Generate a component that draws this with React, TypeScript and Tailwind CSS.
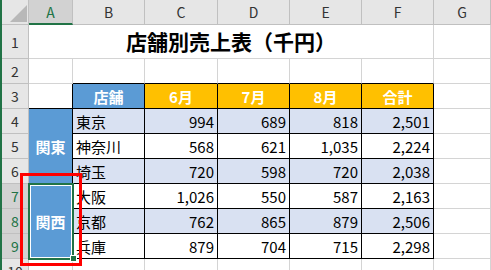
import React from "react";

const FONT = "font-['Noto_Sans_CJK_JP','Noto_Sans',sans-serif]";

const rows = [
  { name: "東京", v: ["994", "689", "818", "2,501"], stripe: true },
  { name: "神奈川", v: ["568", "621", "1,035", "2,224"], stripe: false },
  { name: "埼玉", v: ["720", "598", "720", "2,038"], stripe: true },
  { name: "大阪", v: ["1,026", "550", "587", "2,163"], stripe: false },
  { name: "京都", v: ["762", "865", "879", "2,506"], stripe: true },
  { name: "兵庫", v: ["879", "704", "715", "2,298"], stripe: false },
];

const hdr =
  "bg-[#e6e6e6] border-r border-b border-[#c0c0c0] flex items-center justify-center text-[14px] text-[#333]";
const hdrSel =
  "bg-[#d2d2d2] border-r border-b border-[#c0c0c0] flex items-center justify-center text-[14px] text-[#217346]";
const grid = "border-r border-b border-[#d4d4d4] bg-white";

export default function App() {
  const cells: React.ReactNode[] = [];
  let k = 0;
  const push = (n: React.ReactNode) => cells.push(<React.Fragment key={k++}>{n}</React.Fragment>);

  // Column header row
  push(
    <div className="bg-[#e6e6e6] border-r border-b border-[#c0c0c0] relative">
      <svg className="absolute left-[8px] top-[5px]" width="17" height="17" viewBox="0 0 17 17">
        <polygon points="17,0 17,17 0,17" fill="#b8b8b8" />
      </svg>
    </div>
  );
  push(
    <div className="bg-[#d2d2d2] border-r border-[#c0c0c0] border-b-2 border-b-[#217346] flex items-center justify-center text-[14px] text-[#217346]">
      A
    </div>
  );
  ["B", "C", "D", "E", "F", "G"].forEach((c) => push(<div className={hdr}>{c}</div>));

  // Row 1
  push(<div className={hdr}>1</div>);
  push(
    <div className="col-span-6 border-r border-b border-[#d4d4d4] bg-white flex items-center justify-center text-[21px] font-bold text-black">
      店舗別売上表（千円）
    </div>
  );
  push(<div className={grid} />);

  // Row 2
  push(<div className={hdr}>2</div>);
  push(<div className={grid} />);
  for (let i = 0; i < 5; i++)
    push(<div className="border-r border-[#d4d4d4] border-b border-b-black bg-white" />);
  push(<div className={grid} />);

  // Row 3
  push(<div className={hdr}>3</div>);
  push(<div className="bg-white border-r border-r-black border-b border-b-black" />);
  push(
    <div className="bg-[#5b9bd5] border-r border-b border-black flex items-center justify-center text-white font-bold text-[15px]">
      店舗
    </div>
  );
  ["6月", "7月", "8月", "合計"].forEach((m) =>
    push(
      <div className="bg-[#ffc000] border-r border-b border-black flex items-center justify-center text-white font-bold text-[15px]">
        {m}
      </div>
    )
  );
  push(<div className={grid} />);

  // Data rows
  rows.forEach((r, i) => {
    const rn = i + 4;
    const selRow = rn >= 7;
    push(<div className={selRow ? hdrSel : hdr}>{rn}</div>);
    if (i === 0 || i === 3) {
      push(
        <div className="row-span-3 bg-[#5b9bd5] border-r border-b border-black flex items-center justify-center text-white font-bold text-[15px]">
          {i === 0 ? "関東" : "関西"}
        </div>
      );
    }
    const bg = r.stripe ? "bg-[#d9e1f2]" : "bg-white";
    push(
      <div className={`${bg} border-r border-b border-black flex items-center pl-[3px] text-[15px] text-black`}>
        {r.name}
      </div>
    );
    r.v.forEach((v) =>
      push(
        <div className={`${bg} border-r border-b border-black flex items-center justify-end pr-[3px] text-[15px] text-black`}>
          {v}
        </div>
      )
    );
    push(<div className={grid} />);
  });

  // Row 10
  push(<div className={hdr}>10</div>);
  for (let i = 0; i < 7; i++) push(<div className={grid} />);

  return (
    <div className={`${FONT} w-[491px] h-[270px] overflow-hidden bg-white relative`}>
      <div className="border-l-2 border-[#217346] grid grid-cols-[27px_44px_72px_73px_72px_72px_72px_1fr] grid-rows-[25px_34px_25px_25px_25px_25px_25px_25px_25px_25px_25px] leading-none">
        {cells}
      </div>
      {/* selection */}
      <div className="absolute left-[28px] top-[183px] w-[46px] h-[77px] border-2 border-[#217346]">
        <div className="w-full h-full border border-white" />
      </div>
      <div className="absolute left-[70px] top-[255px] w-[7px] h-[7px] bg-[#217346] border border-white" />
      {/* red highlight box */}
      <div className="absolute left-[20px] top-[173px] w-[62px] h-[93px] border-[3px] border-[#ff0000]" />
    </div>
  );
}
